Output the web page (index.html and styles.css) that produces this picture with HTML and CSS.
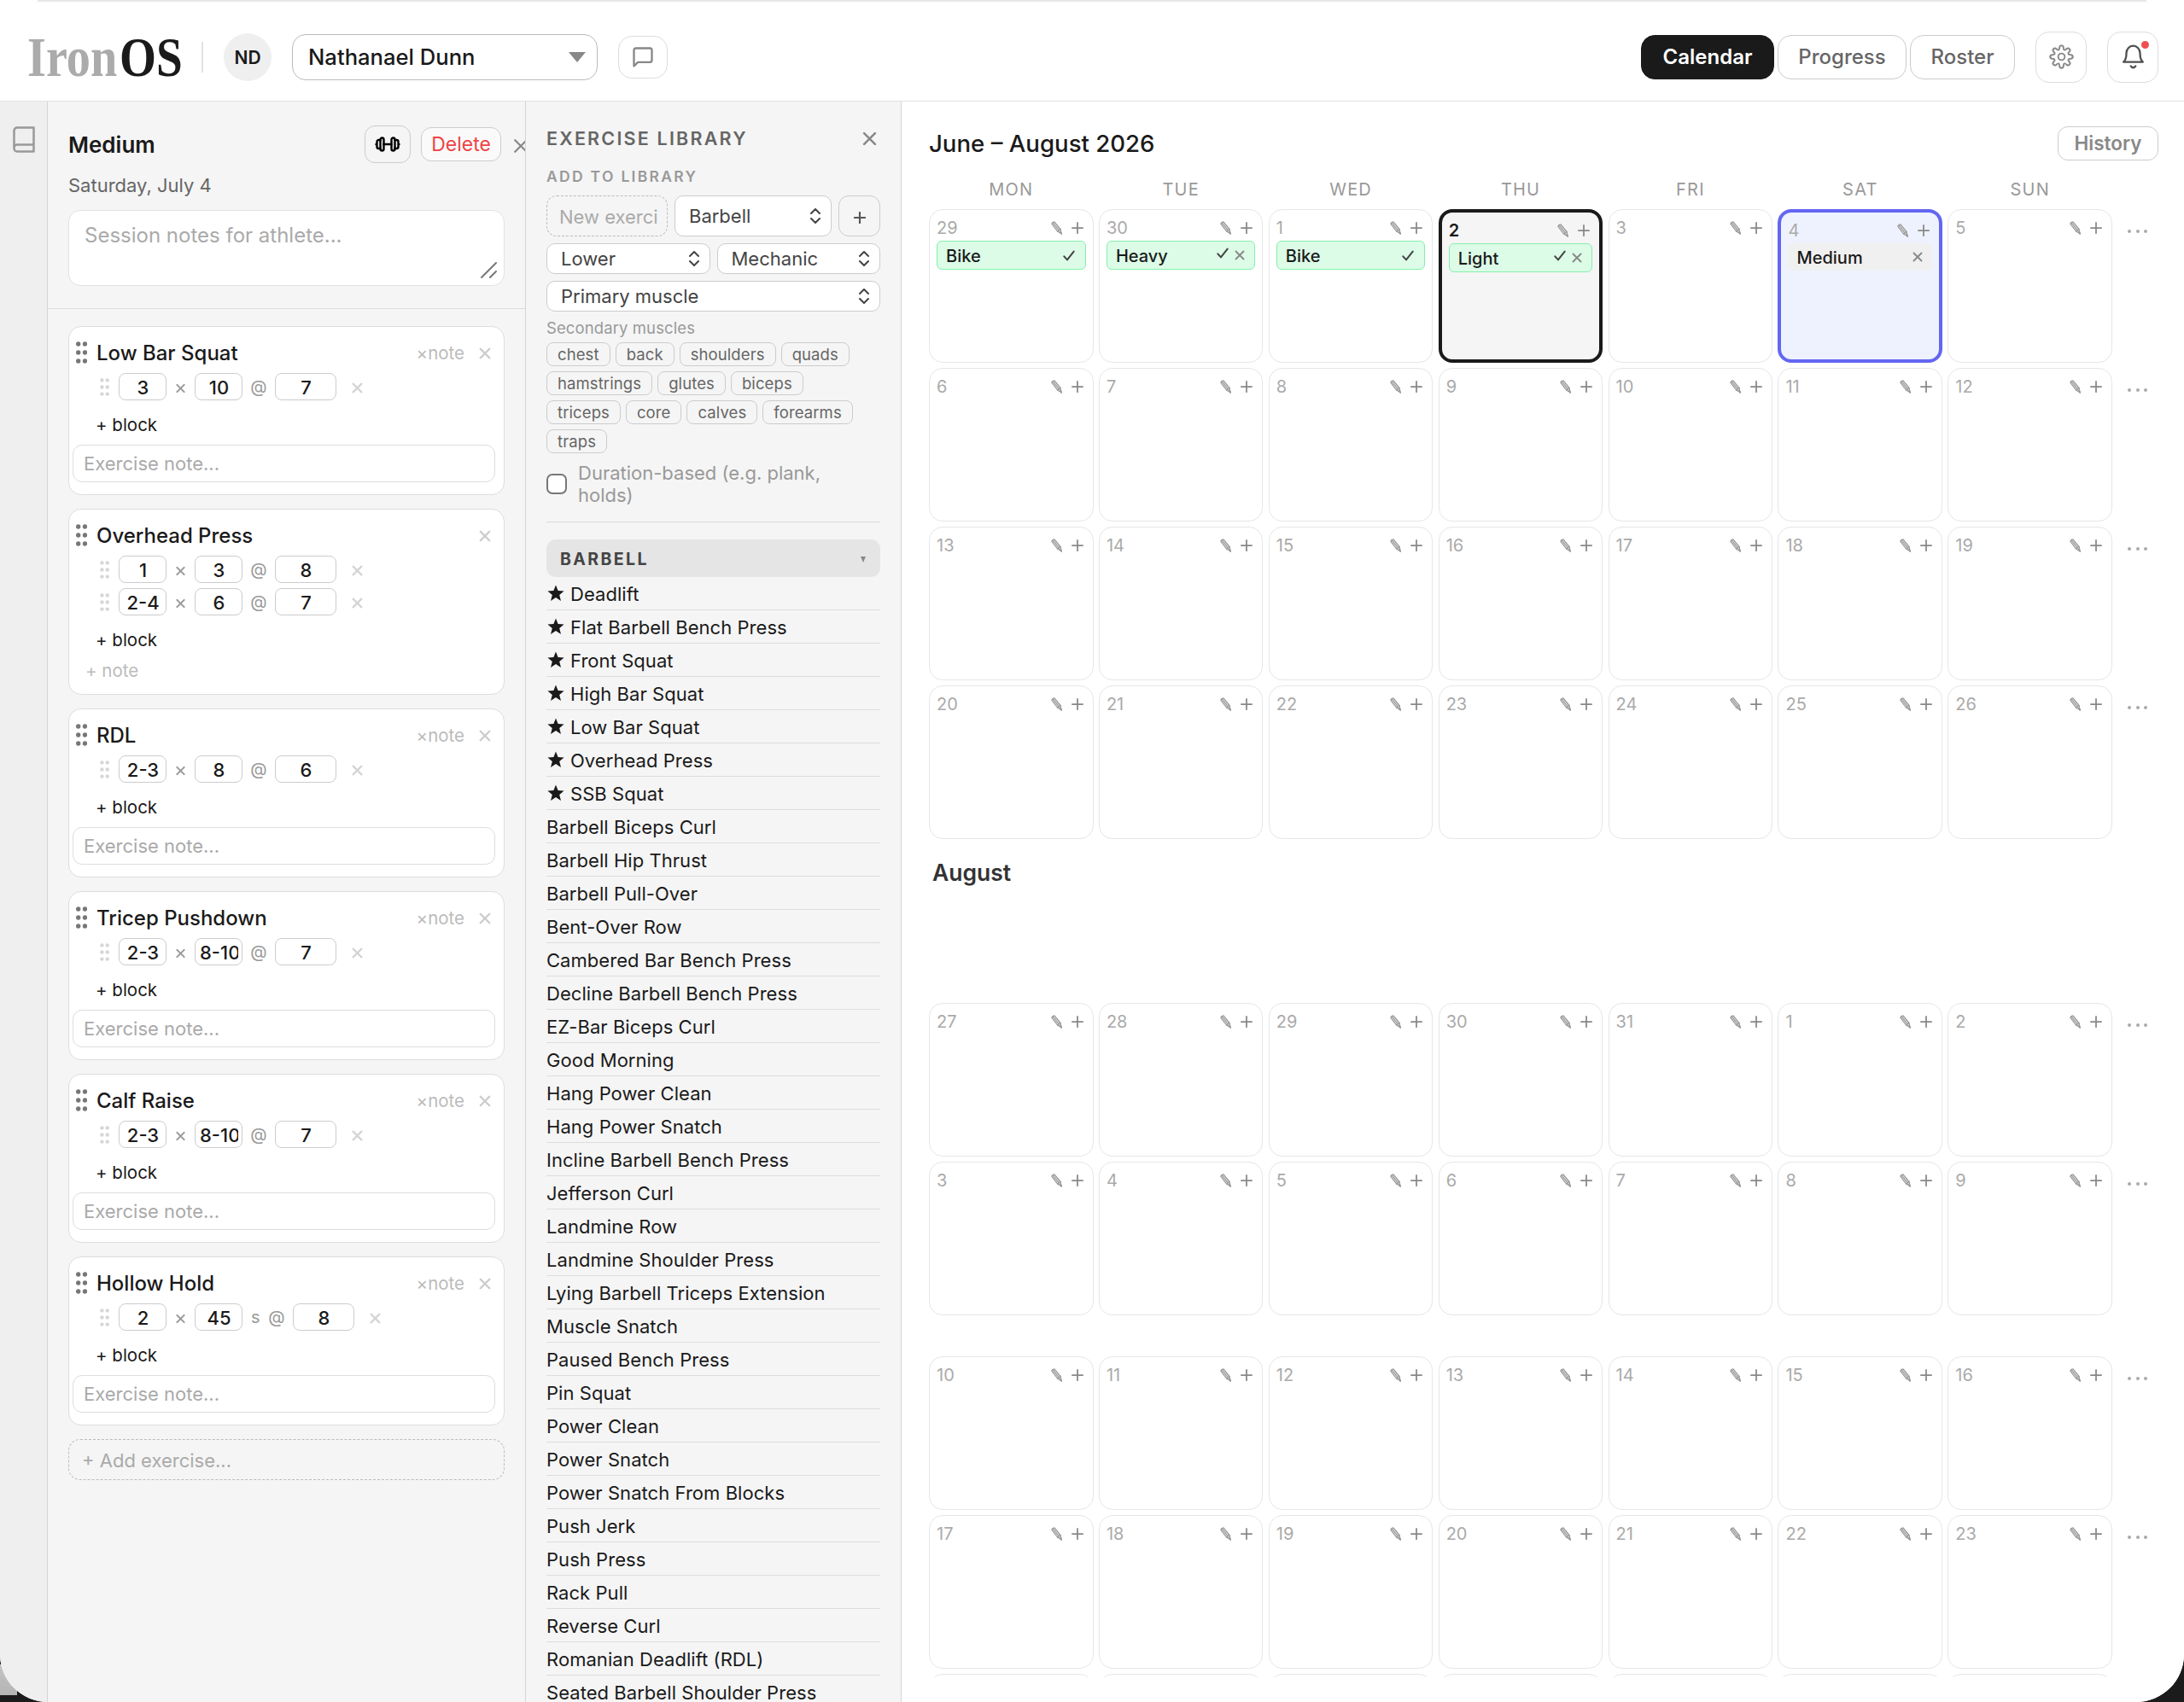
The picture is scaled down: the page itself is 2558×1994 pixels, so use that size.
FILE: index.html
```
<!DOCTYPE html>
<html lang="en">
<head>
  <meta charset="UTF-8" />
  <meta name="viewport" content="width=device-width, initial-scale=1.0" />
  <title>IronOS</title>
  <link rel="stylesheet" href="styles.css">
</head>
<body>
  <svg class="sprite" aria-hidden="true">
    <symbol id="i-x" viewBox="0 0 16 16"><path d="M2 2l12 12M14 2L2 14"/></symbol>
    <symbol id="i-plus" viewBox="0 0 16 16"><path d="M8 1v14M1 8h14"/></symbol>
    <symbol id="i-check" viewBox="0 0 18 16"><path d="M2 9l4.500 5L16 2"/></symbol>
    <symbol id="i-updown" viewBox="0 0 14 18"><path d="M2 6l5-5 5 5M2 12l5 5 5-5"/></symbol>
    <symbol id="i-pencil" viewBox="0 0 13 16"><path d="M.8 3.200Q1.500 1 4 .9L11 9.500l1.200 5.300L7.500 12z" fill="#ddd"/><path d="M2.300 2l7 9M7.500 12l3.500-2.500"/><path d="M11 13l1.200 1.800" stroke-width="2"/></symbol>
    <symbol id="i-star" viewBox="0 0 20 20"><path d="M10 .5l2.600 6.600 7 .4-5.400 4.500 1.800 6.900L10 15l-6 3.900 1.800-6.900L.4 7.500l7-.4z"/></symbol>
    <symbol id="i-dots" viewBox="0 0 13 26"><circle cx="2.700" cy="3" r="2.700"/><circle cx="10.500" cy="3" r="2.700"/><circle cx="2.700" cy="13" r="2.700"/><circle cx="10.500" cy="13" r="2.700"/><circle cx="2.700" cy="23" r="2.700"/><circle cx="10.500" cy="23" r="2.700"/></symbol>
    <path id="gear-quarter" d="M13.600 0Q13.600 2.400 11.150 2.400Q8.700 2.400 8.250 3.400Q7.800 4.400 9.550 6.150Q11.300 7.900 9.600 9.600Q7.900 11.300 6.150 9.550Q4.400 7.800 3.400 8.250Q2.400 8.700 2.400 11.150Q2.400 13.600 0 13.600"/>
  </svg>

  <div class="app">
    <div class="topstrip"></div>
    <header class="header">
      <div class="logo"><span class="logo-iron">Iron</span><span class="logo-os">OS</span></div>
      <div class="divider"></div>
      <div class="avatar">ND</div>
      <div class="athlete"><span>Nathanael Dunn</span><i class="caret"></i></div>
      <button class="btn chat"><svg width="28" height="28" viewBox="0 0 24 24"><path d="M21 15a2 2 0 0 1-2 2H7l-4 4V5a2 2 0 0 1 2-2h14a2 2 0 0 1 2 2z"/></svg></button>
      <nav class="nav">
        <button class="tab active">Calendar</button>
        <button class="tab progress">Progress</button>
        <button class="tab roster">Roster</button>
      </nav>
      <button class="btn square gear"><svg width="29" height="29" viewBox="-15 -15 30 30"><circle r="4"/><use href="#gear-quarter"/><use href="#gear-quarter" transform="rotate(90)"/><use href="#gear-quarter" transform="rotate(180)"/><use href="#gear-quarter" transform="rotate(270)"/></svg></button>
      <button class="btn square bell"><svg width="25" height="29" viewBox="0 0 25 29"><path d="M1.200 20.700h22.600c-2.300-2-3.300-5-3.300-10.500a8 8.500 0 0 0-16 0c0 5.500-1 8.500-3.300 10.500zM9.800 25.500q2.700 3.500 5.400 0"/></svg><i class="badge"></i></button>
    </header>

    <div class="main">
      <aside class="rail">
        <svg width="26" height="31" viewBox="0 0 26 31"><path d="M5 1.500h19.500v28H5a3.500 3.500 0 0 1-3.500-3.500V5A3.500 3.500 0 0 1 5 1.500zM1.500 26A3.700 3.700 0 0 1 5 21.500h19.500"/></svg>
      </aside>

      <section class="session">
        <div class="session-head">
          <div class="session-title">
            <h2>Medium</h2>
            <button class="btn barbell"><svg width="30" height="18" viewBox="0 0 30 18"><rect x="6.500" y="1.500" width="4" height="15" rx="2"/><rect x="19.500" y="1.500" width="4" height="15" rx="2"/><path d="M10.500 9h9M6.500 4H4.500a2 2 0 0 0-2 2v6a2 2 0 0 0 2 2h2M23.500 4h2a2 2 0 0 1 2 2v6a2 2 0 0 1-2 2h-2M1.500 9h1M27.500 9h1"/></svg></button>
            <button class="btn delete">Delete</button>
            <svg class="ico close-session"><use href="#i-x"/></svg>
          </div>
          <div class="date">Saturday, July 4</div>
          <div class="session-notes">Session notes for athlete...
            <svg class="grip" width="20" height="20" viewBox="0 0 20 20"><path d="M1 18L18 1M11 18l7-7"/></svg>
          </div>
        </div>
        <div class="cards" id="cards"></div>
      </section>

      <section class="library">
        <div class="lib-title"><h3>EXERCISE LIBRARY</h3><svg class="ico close-lib"><use href="#i-x"/></svg></div>
        <h4>ADD TO LIBRARY</h4>
        <div class="form">
          <div class="form-row tall">
            <div class="new-name">New exerci</div>
            <div class="select barbell-type">Barbell<svg class="ico updown"><use href="#i-updown"/></svg></div>
            <button class="btn add"><svg class="ico"><use href="#i-plus"/></svg></button>
          </div>
          <div class="form-row">
            <div class="select">Lower<svg class="ico updown"><use href="#i-updown"/></svg></div>
            <div class="select">Mechanic<svg class="ico updown"><use href="#i-updown"/></svg></div>
          </div>
          <div class="form-row">
            <div class="select">Primary muscle<svg class="ico updown"><use href="#i-updown"/></svg></div>
          </div>
        </div>
        <div class="secondary">Secondary muscles</div>
        <div class="chips" id="chips"></div>
        <label class="duration"><i class="checkbox"></i><span>Duration-based (e.g. plank,<br>holds)</span></label>
        <div class="group"><span>BARBELL</span><i class="group-caret"></i></div>
        <div id="exercises"></div>
      </section>

      <section class="calendar">
        <div class="cal-head"><h1>June – August 2026</h1><button class="btn history">History</button></div>
        <div class="cal-body" id="calendar"></div>
      </section>
    </div>
  </div>

  <script>
    const icon = (name, cls) => `<svg class="ico ${cls || ''}"><use href="#i-${name}"/></svg>`;

    const session = [
      { name: 'Low Bar Squat', blocks: [['3', '10', '7']], note: true },
      { name: 'Overhead Press', blocks: [['1', '3', '8'], ['2-4', '6', '7']], note: false },
      { name: 'RDL', blocks: [['2-3', '8', '6']], note: true },
      { name: 'Tricep Pushdown', blocks: [['2-3', '8-10', '7']], note: true },
      { name: 'Calf Raise', blocks: [['2-3', '8-10', '7']], note: true },
      { name: 'Hollow Hold', blocks: [['2', '45', '8']], note: true, seconds: true }
    ];

    document.getElementById('cards').innerHTML = session.map(ex => `
      <div class="card">
        <div class="card-head">
          ${icon('dots', 'drag')}<span class="card-name">${ex.name}</span>
          ${ex.note ? '<span class="note-toggle">×note</span>' : ''}${icon('x', 'remove')}
        </div>
        ${ex.blocks.map(b => `
        <div class="block">
          ${icon('dots', 'drag-sm')}
          <span class="field"><b>${b[0]}</b></span><span class="sep">${icon('x', 'times')}</span>
          <span class="field"><b>${b[1]}</b></span>${ex.seconds ? '<span class="sec">s</span>' : ''}<span class="at">@</span>
          <span class="field wide"><b>${b[2]}</b></span>${icon('x', 'remove-sm')}
        </div>`).join('')}
        <div class="add-block">+ block</div>
        ${ex.note ? '<div class="ex-note">Exercise note...</div>' : '<div class="add-note">+ note</div>'}
      </div>`).join('') + '<div class="add-exercise">+ Add exercise...</div>';

    const muscles = ['chest', 'back', 'shoulders', 'quads', 'hamstrings', 'glutes', 'biceps', 'triceps', 'core', 'calves', 'forearms', 'traps'];
    document.getElementById('chips').innerHTML = muscles.map(m => `<span class="chip">${m}</span>`).join('');

    const starred = ['Deadlift', 'Flat Barbell Bench Press', 'Front Squat', 'High Bar Squat', 'Low Bar Squat', 'Overhead Press', 'SSB Squat'];
    const exercises = ['Barbell Biceps Curl', 'Barbell Hip Thrust', 'Barbell Pull-Over', 'Bent-Over Row', 'Cambered Bar Bench Press',
      'Decline Barbell Bench Press', 'EZ-Bar Biceps Curl', 'Good Morning', 'Hang Power Clean', 'Hang Power Snatch',
      'Incline Barbell Bench Press', 'Jefferson Curl', 'Landmine Row', 'Landmine Shoulder Press', 'Lying Barbell Triceps Extension',
      'Muscle Snatch', 'Paused Bench Press', 'Pin Squat', 'Power Clean', 'Power Snatch', 'Power Snatch From Blocks', 'Push Jerk',
      'Push Press', 'Rack Pull', 'Reverse Curl', 'Romanian Deadlift (RDL)', 'Seated Barbell Shoulder Press'];
    document.getElementById('exercises').innerHTML =
      starred.map(e => `<div class="exercise">${icon('star', 'star')}${e}</div>`).join('') +
      exercises.map(e => `<div class="exercise">${e}</div>`).join('');

    const weeks = [
      [29, 30, 1, 2, 3, 4, 5], [6, 7, 8, 9, 10, 11, 12], [13, 14, 15, 16, 17, 18, 19], [20, 21, 22, 23, 24, 25, 26],
      'August',
      [27, 28, 29, 30, 31, 1, 2], [3, 4, 5, 6, 7, 8, 9],
      'gap',
      [10, 11, 12, 13, 14, 15, 16], [17, 18, 19, 20, 21, 22, 23], 'next'
    ];
    const events = {
      0: { label: 'Bike', done: true }, 1: { label: 'Heavy', done: true, x: true }, 2: { label: 'Bike', done: true },
      3: { label: 'Light', done: true, x: true }, 5: { label: 'Medium', x: true }
    };
    const drawEvent = e => !e ? '' : `<div class="event ${e.done ? 'done' : ''}"><span>${e.label}</span>
      ${e.done ? icon('check', e.x ? 'check raised' : 'check') : ''}${e.x ? icon('x', 'event-x') : ''}</div>`;

    let html = '<div class="weekdays">' + ['MON', 'TUE', 'WED', 'THU', 'FRI', 'SAT', 'SUN'].map(d => `<span>${d}</span>`).join('') + '</div>';
    weeks.forEach((week, w) => {
      if (week === 'August') { html += '<div class="month">August</div>'; return; }
      if (week === 'gap') { html += '<div class="month-gap"></div>'; return; }
      if (week === 'next') { html += '<div class="week">' + '<div class="day"></div>'.repeat(7) + '</div>'; return; }
      html += '<div class="week">' + week.map((day, d) => {
        const state = w === 0 && d === 3 ? 'today' : w === 0 && d === 5 ? 'selected' : '';
        return `<div class="day ${state}"><div class="day-head"><span>${day}</span>${icon('pencil', 'pencil')}${icon('plus', 'plus')}</div>
          ${w === 0 ? drawEvent(events[d]) : ''}</div>`;
      }).join('') + '<div class="more"><i></i><i></i><i></i></div></div>';
    });
    document.getElementById('calendar').innerHTML = html;
  </script>
</body>
</html>
```
FILE: styles.css
```
* {
  box-sizing: border-box;
}
body {
  margin: 0;
  height: 1994px;
  overflow: hidden;
  background: linear-gradient(#c4c4c4, #b4b4b4) 0 1950px / 20px 36px no-repeat, #1b1b1b;
  font-family: Inter, "Liberation Sans", sans-serif;
  color: #1a1a1a;
}
h1, h2, h3, h4 {
  margin: 0;
}
.sprite {
  position: absolute;
  width: 0;
  height: 0;
}
svg {
  fill: none;
  stroke: currentColor;
  stroke-width: 2;
  stroke-linecap: round;
  stroke-linejoin: round;
  flex: none;
}
.app {
  display: flex;
  flex-direction: column;
  height: 1994px;
  overflow: hidden;
  background: #fff;
  border-radius: 0 0 56px 56px;
}
.topstrip {
  height: 2px;
  margin: 0 44px;
  background: #e6e6e6;
  flex: none;
}
.btn {
  display: flex;
  align-items: center;
  justify-content: center;
  padding: 0;
  font-family: inherit;
  background: transparent;
  border: 1.5px solid #ccc;
  border-radius: 12px;
}

/* header */
.header {
  display: flex;
  align-items: center;
  height: 117px;
  padding: 13px 30px 0 32px;
  border-bottom: 1.5px solid #e2e2e2;
  flex: none;
}
.logo {
  display: flex;
  width: 204px;
  height: 74px;
  line-height: 74px;
  font-family: "Liberation Serif", serif;
  font-size: 65px;
  font-weight: bold;
}
.logo-iron {
  width: 108px;
  color: #ababab;
  transform: scaleX(.865);
  transform-origin: left;
}
.logo-os {
  transform: scaleX(.85);
  transform-origin: left;
}
.divider {
  width: 2px;
  height: 36px;
  background: #e2e2e2;
}
.avatar {
  width: 56px;
  height: 56px;
  margin-left: 24px;
  border-radius: 50%;
  background: #efefef;
  text-align: center;
  line-height: 57px;
  font-size: 21px;
  font-weight: 600;
}
.athlete {
  display: flex;
  align-items: center;
  justify-content: space-between;
  width: 358px;
  height: 54px;
  margin-left: 24px;
  padding: 0 13px 0 18px;
  border: 1.5px solid #bbb;
  border-radius: 16px;
  font-size: 25.6px;
  font-weight: 500;
}
.caret {
  border: 10px solid transparent;
  border-top: 12px solid #888;
  border-bottom: 0;
}
.chat {
  width: 58px;
  height: 50px;
  margin-left: 24px;
  border-color: #ddd;
  border-radius: 16px;
  color: #888;
}
.nav {
  display: flex;
  gap: 4px;
  margin-left: auto;
}
.tab {
  width: 151px;
  height: 52px;
  padding: 0;
  font-family: inherit;
  font-size: 24px;
  font-weight: 500;
  color: #666;
  background: #fff;
  border: 1.5px solid #ccc;
  border-radius: 16px;
}
.tab.active {
  width: 156px;
  color: #fff;
  background: #1a1a1a;
  border-color: #1a1a1a;
  font-weight: 600;
}
.tab.roster {
  width: 123px;
}
.square {
  position: relative;
  width: 60px;
  height: 60px;
  margin-left: 24px;
  border-color: #ddd;
  border-radius: 16px;
  color: #888;
}
.bell {
  color: #505050;
}
.bell svg {
  stroke-width: 2.300;
}
.badge {
  position: absolute;
  top: 10px;
  right: 10px;
  width: 9px;
  height: 9px;
  border-radius: 50%;
  background: #ef4f4f;
}
.main {
  display: flex;
  flex: 1;
  min-height: 0;
}
.rail {
  width: 56px;
  padding: 29px 0 0 15px;
  background: #efefef;
  border-right: 1.5px solid #d4d4d4;
  color: #999;
  flex: none;
}
.rail svg {
  stroke-width: 2.5;
}

/* session */
.session {
  width: 560px;
  background: #f5f5f5;
  border-right: 1.5px solid #d4d4d4;
  overflow: hidden;
  flex: none;
}
.session-head {
  height: 243px;
  padding: 28px 0 0 24px;
  border-bottom: 1.5px solid #ddd;
}
.session-title {
  display: flex;
  align-items: center;
  height: 44px;
}
.session h2 {
  width: 347px;
  font-size: 26px;
  font-weight: 600;
  flex: none;
}
.barbell {
  width: 54px;
  height: 44px;
  flex: none;
}
.barbell svg {
  stroke-width: 2.400;
}
.delete {
  width: 94px;
  height: 40px;
  margin: 0 14px 0 12px;
  font-size: 23px;
  color: #ef4444;
  background: #fafafa;
  flex: none;
}
.close-session {
  width: 18px;
  height: 18px;
  margin-top: 3px;
  color: #888;
}
.date {
  margin: 11px 0 13px;
  line-height: 31px;
  font-size: 22px;
  color: #666;
}
.session-notes {
  position: relative;
  width: 511px;
  height: 89px;
  padding: 14px 18px;
  background: #fff;
  border: 1.5px solid #e2e2e2;
  border-radius: 14px;
  line-height: 30px;
  font-size: 24px;
  color: #aaa;
}
.grip {
  position: absolute;
  right: 7px;
  bottom: 7px;
  color: #777;
}
.cards {
  display: flex;
  flex-direction: column;
  gap: 16px;
  padding: 20px 24px;
}
.card {
  width: 511px;
  padding: 12px 10px 14px 4px;
  background: #fff;
  border: 1.5px solid #ddd;
  border-radius: 15px;
}
.card-head {
  display: flex;
  align-items: center;
  height: 37px;
  padding-left: 4px;
}
.drag {
  width: 13px;
  height: 26px;
  margin-top: -1px;
  fill: #777;
  stroke: none;
}
.card-name {
  flex: 1;
  margin-left: 11px;
  font-size: 24px;
  font-weight: 500;
}
.note-toggle {
  font-size: 20.5px;
  color: #bbb;
}
.remove {
  width: 14px;
  height: 14px;
  margin: 0 5px 0 17px;
  color: #ccc;
  stroke-width: 2.8;
}
.block {
  display: flex;
  align-items: center;
  height: 32px;
  margin: 5px 0 6px 31px;
  font-size: 22px;
}
.block + .block {
  margin-top: 0;
}
.drag-sm {
  width: 13px;
  height: 21px;
  margin-right: 10px;
  fill: #d6d6d6;
  stroke: none;
}
.field {
  display: flex;
  align-items: center;
  width: 56px;
  height: 32px;
  padding: 1px 4px 0 5px;
  border: 1.5px solid #ccc;
  border-radius: 8px;
}
.field b {
  flex: 1;
  min-width: 0;
  overflow: hidden;
  white-space: nowrap;
  text-align: center;
  font-weight: 500;
}
.field.wide {
  width: 72px;
}
.sep {
  width: 33px;
  text-align: center;
}
.times {
  width: 11px;
  height: 12px;
  color: #999;
  stroke-width: 3;
}
.at {
  width: 38px;
  text-align: center;
  font-size: 20px;
  color: #999;
}
.sec {
  width: 21px;
  padding-left: 10px;
  font-size: 20px;
  color: #999;
}
.remove-sm {
  width: 13px;
  height: 13px;
  margin: 2px 0 0 18px;
  color: #d4d4d4;
  stroke-width: 2.8;
}
.add-block {
  height: 46px;
  padding-left: 27px;
  line-height: 46px;
  font-size: 20.5px;
}
.ex-note {
  width: 495px;
  height: 44px;
  padding-left: 12px;
  border: 1.5px solid #ddd;
  border-radius: 11px;
  line-height: 43px;
  font-size: 22px;
  color: #aaa;
}
.add-note {
  height: 26px;
  padding-left: 15px;
  line-height: 26px;
  font-size: 20.5px;
  color: #bbb;
}
.add-exercise {
  width: 511px;
  height: 48px;
  padding-left: 15px;
  border: 1.5px dashed #bbb;
  border-radius: 14px;
  line-height: 48px;
  font-size: 22px;
  color: #aaa;
}

/* library */
.library {
  width: 440px;
  padding: 27px 24px 0 24px;
  background: #f5f5f5;
  border-right: 1.5px solid #d4d4d4;
  overflow: hidden;
  flex: none;
}
.lib-title {
  display: flex;
  align-items: center;
  justify-content: space-between;
  height: 32px;
  padding-right: 4px;
}
.library h3 {
  font-size: 21.5px;
  font-weight: 600;
  letter-spacing: 2.2px;
  color: #666;
}
.close-lib {
  width: 17px;
  height: 17px;
  color: #888;
  stroke-width: 2.400;
}
.library h4 {
  height: 51px;
  line-height: 58px;
  font-size: 17.5px;
  font-weight: 600;
  letter-spacing: 2.3px;
  color: #999;
}
.form {
  display: flex;
  flex-direction: column;
  gap: 8px;
}
.form-row {
  display: flex;
  gap: 8px;
  height: 36px;
}
.form-row.tall {
  height: 48px;
}
.new-name {
  width: 142px;
  padding: 0 0 0 14px;
  border: 1.5px dashed #bbb;
  border-radius: 12px;
  line-height: 48px;
  font-size: 22px;
  white-space: nowrap;
  color: #aaa;
}
.select {
  display: flex;
  flex: 1;
  align-items: center;
  justify-content: space-between;
  padding: 0 11px 0 16px;
  background: #fff;
  border: 1.5px solid #ccc;
  border-radius: 10px;
  font-size: 22px;
  color: #444;
}
.updown {
  width: 14px;
  height: 18px;
}
.add {
  width: 49px;
  color: #555;
}
.add svg {
  width: 14px;
  height: 14px;
  margin-top: 3px;
  stroke-width: 2.400;
}
.secondary {
  height: 36px;
  line-height: 39px;
  font-size: 18.5px;
  letter-spacing: .1px;
  color: #999;
}
.chips {
  display: flex;
  flex-wrap: wrap;
  gap: 6px;
  width: 384px;
}
.chip {
  height: 28px;
  padding: 0 12px;
  border: 1.5px solid #ccc;
  border-radius: 8px;
  line-height: 26px;
  font-size: 18.5px;
  letter-spacing: .1px;
  color: #666;
}
.duration {
  display: flex;
  align-items: center;
  gap: 13px;
  height: 81px;
  padding-bottom: 9px;
  margin-bottom: 20px;
  border-bottom: 1.5px solid #d8d8d8;
  line-height: 26px;
  font-size: 22px;
  color: #999;
}
.checkbox {
  width: 24px;
  height: 24px;
  background: #fff;
  border: 2.5px solid #777;
  border-radius: 7px;
}
.group {
  display: flex;
  align-items: center;
  justify-content: space-between;
  height: 44px;
  padding: 2px 17px 0 16px;
  border-radius: 11px;
  background: #e5e5e5;
  font-size: 19.5px;
  font-weight: 700;
  letter-spacing: 2.4px;
  color: #444;
}
.group-caret {
  border: 3.5px solid transparent;
  border-top: 7px solid #888;
  border-bottom: 0;
}
.exercise {
  display: flex;
  align-items: center;
  height: 39px;
  padding-top: 1px;
  border-bottom: 1.5px solid #ddd;
  font-size: 22px;
  letter-spacing: .05px;
  white-space: nowrap;
}
.star {
  width: 20px;
  height: 20px;
  margin: 0 7px 1px 1px;
  fill: currentColor;
  stroke: none;
}

/* calendar */
.calendar {
  flex: 1;
  padding: 28px 30px 0 32px;
  background: #fff;
}
.cal-head {
  display: flex;
  align-items: center;
  justify-content: space-between;
  height: 41px;
}
.calendar h1 {
  font-size: 27.6px;
  font-weight: 500;
}
.history {
  width: 118px;
  height: 40px;
  font-size: 22.5px;
  font-weight: 600;
  color: #888;
}
.cal-body {
  height: 1777px;
  overflow: hidden;
}
.weekdays {
  display: flex;
  gap: 6.300px;
  width: 1386px;
  height: 57px;
  line-height: 69px;
  text-align: center;
  font-size: 20px;
  letter-spacing: 1.2px;
  color: #999;
}
.weekdays span {
  flex: 1;
}
.week {
  display: flex;
  gap: 6.300px;
  height: 180px;
  margin-bottom: 6px;
}
.day {
  width: 192.600px;
  padding: 7px 8px 0;
  border: 1.5px solid #e6e6e6;
  border-radius: 16px;
  flex: none;
}
.day-head {
  display: flex;
  align-items: center;
  height: 29px;
  padding: 0 3px 1px 0;
  font-size: 20px;
  color: #aaa;
}
.day-head span {
  flex: 1;
}
.pencil {
  width: 13px;
  height: 16px;
  margin-right: 11px;
  stroke-width: 1.200;
  color: #999;
}
.plus {
  width: 14px;
  height: 14px;
  color: #888;
}
.today {
  border: 4px solid #1a1a1a;
  background: #f5f5f5;
}
.today .day-head span {
  color: #1a1a1a;
  font-weight: 600;
}
.selected {
  border: 4px solid #6366f1;
  background: #eef2ff;
}
.event {
  display: flex;
  align-items: center;
  height: 32px;
  padding: 1px 10px 0;
  border-radius: 6px;
  background: #f0f0f0;
  font-size: 20px;
  font-weight: 500;
}
.event span {
  flex: 1;
}
.event.done {
  height: 34px;
  background: #dcfce7;
  border: 1.5px solid #86efac;
}
.check {
  width: 16px;
  height: 13px;
  margin-right: 1px;
  color: #444;
  stroke-width: 2.500;
}
.raised {
  margin: 0 6px 7px 0;
}
.event-x {
  width: 12px;
  height: 12px;
  margin: 0 1px 1px 0;
  color: #888;
  stroke-width: 2.500;
}
.more {
  display: flex;
  gap: 5.500px;
  margin: 24px 0 0 12px;
}
.more i {
  width: 4px;
  height: 4px;
  border-radius: 50%;
  background: #aaa;
}
.month {
  height: 186px;
  padding: 18px 0 0 4px;
  line-height: 30px;
  font-size: 26.5px;
  font-weight: 600;
  color: #333;
}
.month-gap {
  height: 42px;
}
```
